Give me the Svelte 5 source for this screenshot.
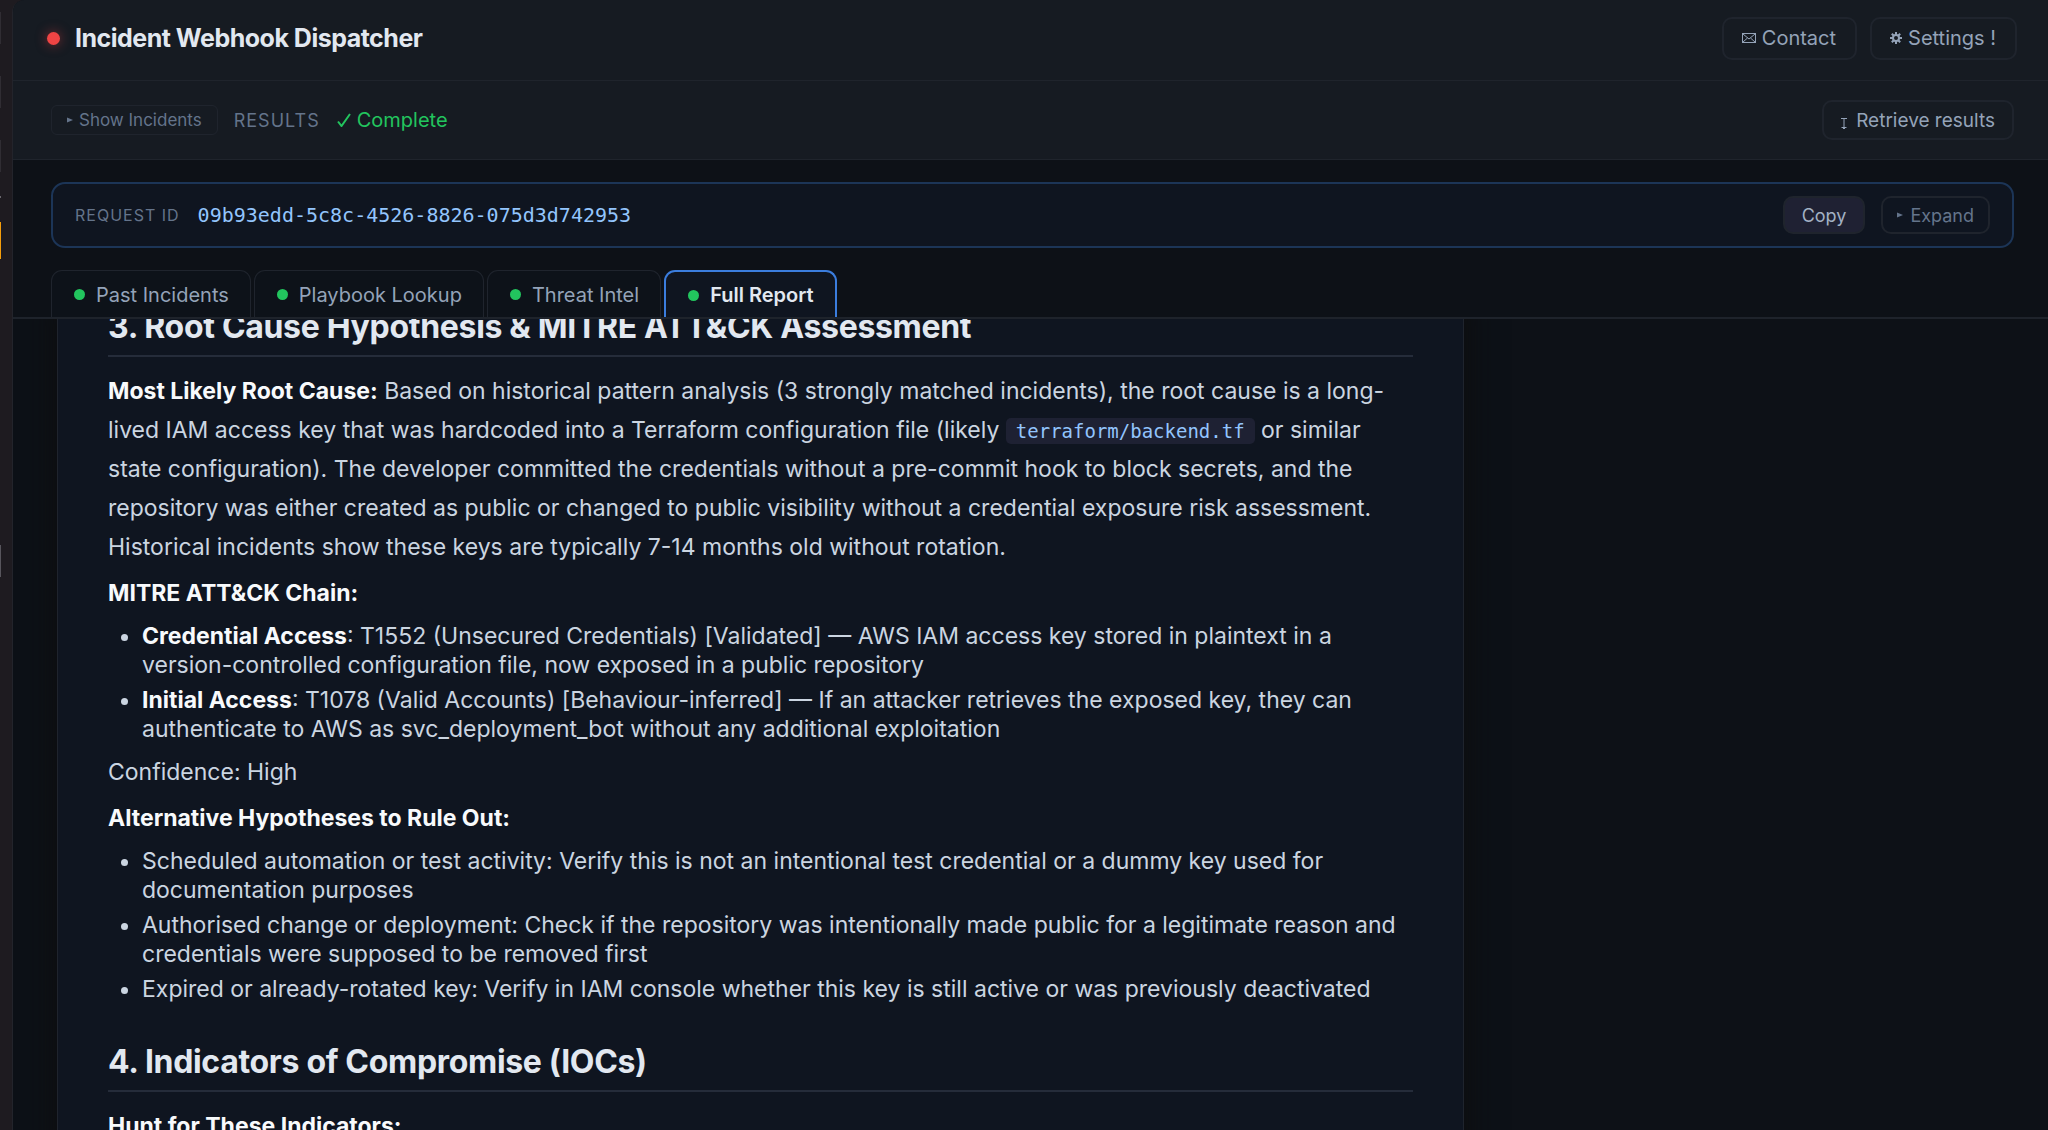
<script lang="ts">
  interface Tab {
    id: string;
    label: string;
  }

  interface Finding {
    term?: string;
    text: string;
  }

  const requestId = '09b93edd-5c8c-4526-8826-075d3d742953';

  const tabs: Tab[] = [
    { id: 'past', label: 'Past Incidents' },
    { id: 'playbook', label: 'Playbook Lookup' },
    { id: 'intel', label: 'Threat Intel' },
    { id: 'report', label: 'Full Report' },
  ];

  const chain: Finding[] = [
    {
      term: 'Credential Access',
      text: ': T1552 (Unsecured Credentials) [Validated] — AWS IAM access key stored in plaintext in a version-controlled configuration file, now exposed in a public repository',
    },
    {
      term: 'Initial Access',
      text: ': T1078 (Valid Accounts) [Behaviour-inferred] — If an attacker retrieves the exposed key, they can authenticate to AWS as svc_deployment_bot without any additional exploitation',
    },
  ];

  const alternatives: Finding[] = [
    {
      text: 'Scheduled automation or test activity: Verify this is not an intentional test credential or a dummy key used for documentation purposes',
    },
    {
      text: 'Authorised change or deployment: Check if the repository was intentionally made public for a legitimate reason and credentials were supposed to be removed first',
    },
    {
      text: 'Expired or already-rotated key: Verify in IAM console whether this key is still active or was previously deactivated',
    },
  ];

  let activeTab = $state('report');

  function copyId() {
    navigator.clipboard?.writeText(requestId);
  }
</script>

{#snippet findings(items: Finding[])}
  <ul>
    {#each items as item}
      <li>{#if item.term}<strong>{item.term}</strong>{/if}{item.text}</li>
    {/each}
  </ul>
{/snippet}

{#snippet caret()}
  <svg class="caret" viewBox="0 0 6 6" aria-hidden="true"><path d="M0 0.5 6 3 0 5.5z" /></svg>
{/snippet}

<div class="shell">
  <aside class="rail" aria-hidden="true">
    <span class="mark first"></span>
    <span class="mark"></span>
    <span class="mark"></span>
    <span class="tick"></span>
    <span class="mark current"></span>
    <span class="mark last"></span>
  </aside>

  <div class="app">
    <header class="topbar">
      <span class="live-dot"></span>
      <h1>Incident Webhook Dispatcher</h1>
      <div class="actions">
        <button type="button" class="btn large">
          <svg class="icon mail" viewBox="0 0 14 10" aria-hidden="true">
            <rect x="0.5" y="0.5" width="13" height="9" />
            <path d="M1 1l6 5L13 1M1 9l4.5-4M13 9L8.5 5" />
          </svg>
          Contact
        </button>
        <button type="button" class="btn large">
          <svg class="icon gear" viewBox="0 0 12 12" aria-hidden="true">
            <circle cx="6" cy="6" r="3" />
            <path d="M6 0v3M6 9v3M0 6h3M9 6h3M1.8 1.8l2 2M8.2 8.2l2 2M10.2 1.8l-2 2M1.8 10.2l2-2" />
          </svg>
          Settings !
        </button>
      </div>
    </header>

    <div class="subbar">
      <button type="button" class="btn small">{@render caret()}Show Incidents</button>
      <span class="section">RESULTS</span>
      <span class="status">
        <svg class="check" viewBox="0 0 14 14" aria-hidden="true"><path d="M1 8.5 4.5 13 13 1" /></svg>
        Complete
      </span>
      <button type="button" class="btn retrieve">
        <svg class="icon beam" viewBox="0 0 6 11" aria-hidden="true">
          <path d="M0 0.5h6M3 0.5v9M0.5 9.5h5M2 10.5h2" />
        </svg>
        Retrieve results
      </button>
    </div>

    <section class="request">
      <span class="request-label">REQUEST ID</span>
      <code class="request-id">{requestId}</code>
      <button type="button" class="btn copy" onclick={copyId}>Copy</button>
      <button type="button" class="btn expand">{@render caret()}Expand</button>
    </section>

    <div class="tabs" role="tablist">
      {#each tabs as tab (tab.id)}
        <button
          type="button"
          role="tab"
          class="tab"
          class:active={tab.id === activeTab}
          aria-selected={tab.id === activeTab}
          onclick={() => (activeTab = tab.id)}
        >
          <span class="dot"></span>{tab.label}
        </button>
      {/each}
    </div>

    <main class="viewport">
      <article class="report">
        <h2>3. Root Cause Hypothesis &amp; MITRE ATT&amp;CK Assessment</h2>
        <p>
          <strong>Most Likely Root Cause:</strong> Based on historical pattern analysis (3 strongly matched incidents),
          the root cause is a long-lived IAM access key that was hardcoded into a Terraform configuration file (likely
          <code>terraform/backend.tf</code> or similar state configuration). The developer committed the credentials
          without a pre-commit hook to block secrets, and the repository was either created as public or changed to
          public visibility without a credential exposure risk assessment. Historical incidents show these keys are
          typically 7-14 months old without rotation.
        </p>
        <p><strong>MITRE ATT&amp;CK Chain:</strong></p>
        {@render findings(chain)}
        <p>Confidence: High</p>
        <p><strong>Alternative Hypotheses to Rule Out:</strong></p>
        {@render findings(alternatives)}
        <h2>4. Indicators of Compromise (IOCs)</h2>
        <p><strong>Hunt for These Indicators:</strong></p>
      </article>
    </main>
  </div>
</div>

<style>
  :global(body) {
    background: #1e1b20;
  }

  .shell {
    display: flex;
    height: 100vh;
    overflow: hidden;
    font-family: Inter, 'Liberation Sans', sans-serif;
    color: #cbd5e1;
    background: #1e1b20;
  }

  .rail {
    display: flex;
    flex-direction: column;
    flex: 0 0 12px;
  }

  .mark {
    width: 1px;
    height: 32px;
    margin-bottom: 32px;
    background: #302d33;
  }

  .mark.first {
    margin-top: 12px;
  }

  .tick {
    width: 1px;
    height: 2px;
    margin: -8px 0 24px;
    background: #6b696f;
  }

  .mark.current {
    height: 37px;
    margin-bottom: 286px;
    background: #f59e0b;
  }

  .mark.last {
    background: #57555c;
  }

  .app {
    display: flex;
    flex-direction: column;
    flex: 1;
    min-width: 0;
    background: #0d1117;
    border-left: 1px solid #23242b;
    border-top-left-radius: 12px;
    overflow: hidden;
  }

  .topbar {
    display: flex;
    align-items: center;
    box-sizing: border-box;
    height: 81px;
    padding: 0 31px 4px 34px;
    background: #161b22;
    border-bottom: 1px solid #1f242c;
  }

  .live-dot {
    width: 13px;
    height: 13px;
    border-radius: 50%;
    background: #ef4444;
    box-shadow: 0 0 12px rgba(239, 68, 68, 0.5);
  }

  h1 {
    margin: 0 0 0 15px;
    font-size: 25px;
    font-weight: 700;
    letter-spacing: -0.02em;
    color: #e2e8f0;
  }

  .actions {
    display: flex;
    gap: 13px;
    margin-left: auto;
  }

  .btn {
    display: flex;
    align-items: center;
    justify-content: center;
    box-sizing: border-box;
    font: inherit;
    font-size: 20px;
    color: #94a3b8;
    background: transparent;
    border: 2px solid #1f242d;
    border-radius: 10px;
    white-space: nowrap;
    cursor: pointer;
  }

  .btn.large {
    height: 43px;
    padding: 0 19px 0 18px;
    gap: 6px;
  }

  .icon {
    fill: none;
    stroke: currentColor;
    stroke-width: 1;
  }

  .mail {
    width: 14px;
    height: 10px;
  }

  .gear {
    width: 12px;
    height: 12px;
    stroke-width: 2;
  }

  .beam {
    width: 6px;
    height: 11px;
    margin-top: 6px;
  }

  .caret {
    width: 6px;
    height: 6px;
    fill: currentColor;
  }

  .subbar {
    display: flex;
    align-items: center;
    box-sizing: border-box;
    height: 79px;
    padding: 0 34px 0 38px;
    background: #161b22;
    border-bottom: 1px solid #1f242c;
  }

  .btn.small {
    height: 30px;
    padding: 0 15px;
    gap: 6px;
    font-size: 17px;
    color: #64748b;
    border-width: 1px;
    border-radius: 6px;
  }

  .section {
    margin-left: 16px;
    font-size: 18px;
    letter-spacing: 1px;
    color: #64748b;
  }

  .status {
    display: flex;
    align-items: center;
    gap: 6px;
    margin-left: 17px;
    font-size: 20px;
    color: #22c55e;
  }

  .check {
    width: 14px;
    height: 14px;
    fill: none;
    stroke: currentColor;
    stroke-width: 2;
  }

  .btn.retrieve {
    height: 40px;
    margin-left: auto;
    padding: 0 17px;
    gap: 9px;
    font-size: 19px;
  }

  .request {
    display: flex;
    align-items: center;
    box-sizing: border-box;
    height: 66px;
    margin: 22px 34px 22px 38px;
    padding: 0 22px;
    background: #0f1520;
    border: 2px solid #1c3557;
    border-radius: 14px;
  }

  .request-label {
    font-size: 16px;
    letter-spacing: 1px;
    color: #64748b;
  }

  .request-id {
    margin-left: 18px;
    font-family: 'DejaVu Sans Mono', monospace;
    font-size: 20px;
    color: #93c5fd;
  }

  .btn.copy {
    height: 38px;
    margin-left: auto;
    padding: 0 17px;
    font-size: 18px;
    background: #1f2133;
    color: #a3b1c4;
  }

  .btn.expand {
    height: 38px;
    margin-left: 16px;
    padding: 0 14px;
    gap: 7px;
    font-size: 18px;
    color: #64748b;
  }

  .tabs {
    display: flex;
    gap: 3px;
    padding: 0 38px;
    border-bottom: 2px solid #1e232b;
  }

  .tab {
    display: flex;
    align-items: center;
    box-sizing: border-box;
    height: 47px;
    padding: 1px 21px 0 22px;
    gap: 11px;
    font: inherit;
    font-size: 20px;
    color: #94a3b8;
    background: #0d1219;
    border: 1px solid #1f242d;
    border-bottom: none;
    border-radius: 11px 11px 0 0;
    cursor: pointer;
  }

  .tab.active {
    font-weight: 600;
    color: #e2e8f0;
    background: #0f1520;
    border: 2px solid #3b7ddd;
    border-bottom: none;
  }

  .dot {
    width: 11px;
    height: 11px;
    border-radius: 50%;
    background: #22c55e;
  }

  .viewport {
    flex: 1;
    min-height: 0;
    padding: 0 44px;
    overflow: hidden;
  }

  .report {
    box-sizing: border-box;
    max-width: 1407px;
    margin-top: -40px;
    padding: 27px 50px 80px;
    background: #0f1520;
    border: 1px solid #1f242d;
    box-shadow: 0 12px 32px rgba(13, 13, 12, 0.9);
  }

  h2 {
    margin: 38px 0 15px;
    padding-bottom: 8px;
    font-size: 32px;
    font-weight: 700;
    line-height: 40px;
    letter-spacing: -0.01em;
    color: #e2e8f0;
    border-bottom: 2px solid #252c3a;
  }

  h2:first-child {
    margin-top: 0;
  }

  p {
    margin: 0 0 7px;
    font-size: 23px;
    line-height: 39px;
  }

  strong {
    font-weight: 700;
    color: #f8fafc;
  }

  p code {
    padding: 2px 10px;
    font-family: 'DejaVu Sans Mono', monospace;
    font-size: 19px;
    line-height: 1;
    color: #93c5fd;
    background: #1e2133;
    border-radius: 5px;
  }

  ul {
    margin: 9px 0;
    padding-left: 34px;
    font-size: 23px;
    line-height: 29px;
  }

  li {
    margin-bottom: 6px;
  }
</style>
